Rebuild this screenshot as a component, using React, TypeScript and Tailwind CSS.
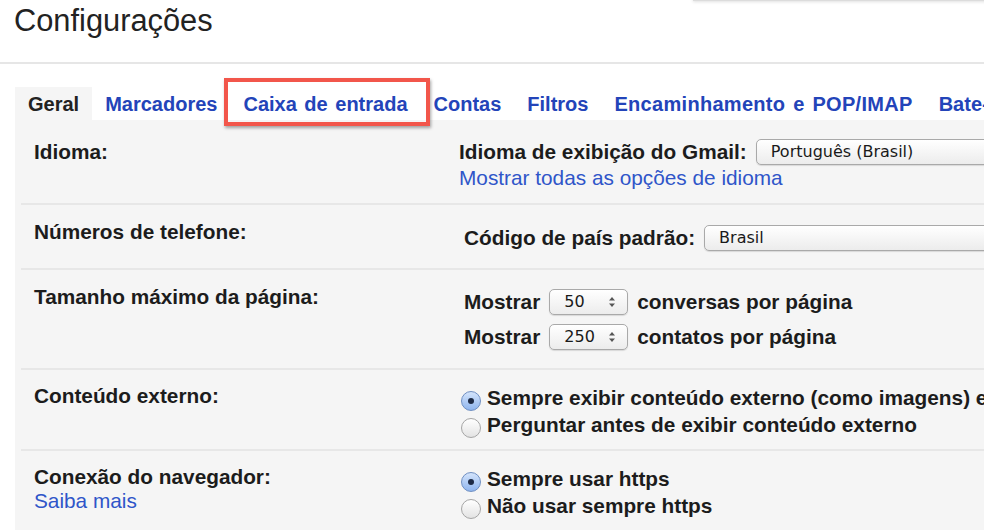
import React from "react";

const tabs = [
  "Geral",
  "Marcadores",
  "Caixa de entrada",
  "Contas",
  "Filtros",
  "Encaminhamento e POP/IMAP",
  "Bate-papo",
];

const SelectBox: React.FC<{ value: string; className?: string; small?: boolean }> = ({ value, className, small }) => (
  <div
    className={
      "flex items-center h-[26px] rounded-[5px] border border-[#a9a9a9] bg-gradient-to-b from-white to-[#ececec] shadow-[0_1px_1px_rgba(0,0,0,0.12)] pl-[14px] font-['DejaVu_Sans',sans-serif] text-[16px] font-normal text-[#1a1a1a] shrink-0 " +
      (className || "")
    }
  >
    <span className="flex-1 whitespace-nowrap">{value}</span>
    {small && (
      <svg width="8" height="14" viewBox="0 0 8 14" className="mr-[11px]">
        <path d="M1 5.5 L4 2 L7 5.5 Z" fill="#555" />
        <path d="M1 8.5 L4 12 L7 8.5 Z" fill="#555" />
      </svg>
    )}
  </div>
);

const Radio: React.FC<{ checked?: boolean }> = ({ checked }) => (
  <span
    className={
      "w-[20px] h-[20px] rounded-full border shrink-0 flex items-center justify-center translate-y-[3px] " +
      (checked
        ? "border-[#6f8fc2] bg-gradient-to-b from-[#d4e4fb] to-[#8fb5ee]"
        : "border-[#a5a5a5] bg-gradient-to-b from-white to-[#e3e3e3]")
    }
  >
    {checked && <span className="w-[6px] h-[6px] rounded-full bg-[#1d2a44]" />}
  </span>
);

const Row: React.FC<{ className?: string; label: React.ReactNode; children: React.ReactNode }> = ({ className, label, children }) => (
  <div className={"ml-[6px] flex border-b-2 border-[#e7e7e7] " + (className || "")}>
    <div className="w-[438px] shrink-0 pl-[13px]">{label}</div>
    <div className="flex-1 min-w-0">{children}</div>
  </div>
);

export default function App() {
  return (
    <div className="w-[984px] h-[530px] overflow-hidden bg-white relative font-['Liberation_Sans',Arial,sans-serif] text-[#1c1c1c]">
      <div className="absolute top-[-30px] left-[693px] w-[320px] h-[31px] bg-white border border-[#dcdcdc] shadow-[0_1px_3px_rgba(0,0,0,0.12)]" />

      <div className="h-[64px] border-b-2 border-[#e6e6e6]">
        <h1 className="pl-[14px] pt-[3px] text-[30.8px] leading-[36px] text-[#222]">Configurações</h1>
      </div>

      <div className="pl-[15px] flex h-[56px] items-end">
        {tabs.map((t, i) => (
          <div
            key={t}
            className={
              "relative h-[33px] flex items-center px-[13px] text-[20px] [word-spacing:2px] font-bold whitespace-nowrap " +
              (i === 0 ? "bg-[#f5f5f5] text-[#222]" : "text-[#2344b9]") +
              (i === 5 ? " tracking-[0.3px]" : "")
            }
          >
            {t}
            {i === 2 && (
              <span className="absolute left-[-6px] right-[-9px] top-[-9px] bottom-[-6px] border-[4px] border-[#f2564b] shadow-[1px_2px_3px_rgba(0,0,0,0.35)]" />
            )}
          </div>
        ))}
      </div>

      <div className="ml-[15px] bg-[#f5f5f5] h-[410px] text-[20.8px] font-bold">
        <Row className="h-[85px] pt-[20px]" label={<div className="leading-[24px]">Idioma:</div>}>
          <div className="flex items-center h-[28px] -mt-[2px] whitespace-nowrap">
            <span>Idioma de exibição do Gmail:</span>
            <SelectBox value="Português (Brasil)" className="ml-[9px] w-[300px]" />
          </div>
          <div className="leading-[24px] font-normal text-[#2f55c9] whitespace-nowrap">Mostrar todas as opções de idioma</div>
        </Row>

        <Row className="h-[65px] pt-[15px]" label={<div className="leading-[24px]">Números de telefone:</div>}>
          <div className="flex items-center h-[26px] mt-[5px] pl-[5px] whitespace-nowrap">
            <span>Código de país padrão:</span>
            <SelectBox value="Brasil" className="ml-[9px] w-[320px]" />
          </div>
        </Row>

        <Row className="h-[100px] pt-[15px]" label={<div className="leading-[24px]">Tamanho máximo da página:</div>}>
          <div className="mt-[4px] pl-[5px] flex flex-col gap-[9px]">
            <div className="flex items-center h-[26px] whitespace-nowrap">
              <span>Mostrar</span>
              <SelectBox value="50" small className="ml-[9px] mr-[9px] w-[79px]" />
              <span>conversas por página</span>
            </div>
            <div className="flex items-center h-[26px] whitespace-nowrap">
              <span>Mostrar</span>
              <SelectBox value="250" small className="ml-[9px] mr-[9px] w-[79px]" />
              <span>contatos por página</span>
            </div>
          </div>
        </Row>

        <Row className="h-[81px] pt-[14px]" label={<div className="leading-[24px]">Conteúdo externo:</div>}>
          <div className="pl-[2px] flex flex-col">
            <div className="flex items-center gap-[6px] h-[27px] whitespace-nowrap">
              <Radio checked />
              <span>Sempre exibir conteúdo externo (como imagens) enviado por remetentes confiáveis</span>
            </div>
            <div className="flex items-center gap-[6px] h-[27px] whitespace-nowrap">
              <Radio />
              <span>Perguntar antes de exibir conteúdo externo</span>
            </div>
          </div>
        </Row>

        <div className="ml-[6px] flex pt-[14px]">
          <div className="w-[438px] shrink-0 pl-[13px] leading-[24px]">
            <div>Conexão do navegador:</div>
            <div className="font-normal text-[#2f55c9]">Saiba mais</div>
          </div>
          <div className="pl-[2px] flex flex-col">
            <div className="flex items-center gap-[6px] h-[27px] whitespace-nowrap">
              <Radio checked />
              <span>Sempre usar https</span>
            </div>
            <div className="flex items-center gap-[6px] h-[27px] whitespace-nowrap">
              <Radio />
              <span>Não usar sempre https</span>
            </div>
          </div>
        </div>
      </div>
    </div>
  );
}
